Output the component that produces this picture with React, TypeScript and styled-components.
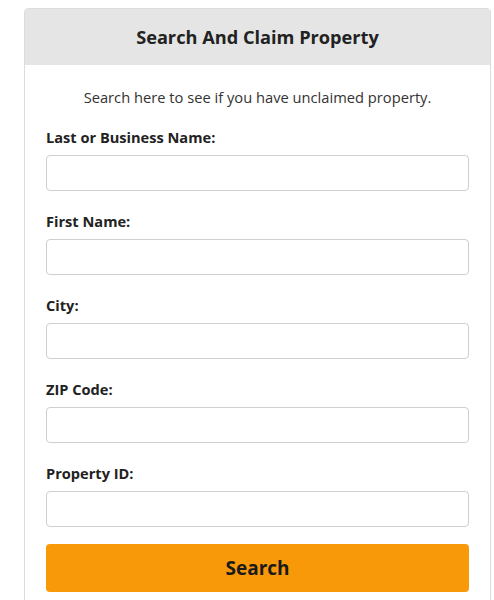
import styled, { createGlobalStyle } from 'styled-components';

const GlobalStyle = createGlobalStyle`
  body {
    margin: 0;
    background: #fff;
    font-family: "Open Sans", "Liberation Sans", sans-serif;
    color: #222;
  }
`;

const fields = ['Last or Business Name:', 'First Name:', 'City:', 'ZIP Code:', 'Property ID:'];

const Card = styled.div`
  width: 465px;
  margin: 8px 0 0 24px;
  border: 1px solid #dcdcdc;
  border-radius: 4px 4px 0 0;
  background: #fff;
`;

const Header = styled.div`
  height: 56px;
  background: #e5e5e5;
  display: flex;
  align-items: center;
  justify-content: center;
  font-size: 18.2px;
  font-weight: 700;
  color: #222;
`;

const Body = styled.form`
  padding: 22px 21px 20px;
`;

const Intro = styled.p`
  margin: 0;
  text-align: center;
  font-size: 14.7px;
  color: #333;
`;

const Field = styled.div<{ $first?: boolean }>`
  display: flex;
  flex-direction: column;
  margin-top: ${p => (p.$first ? '20px' : '20px')};
`;

const Label = styled.label`
  font-size: 14.6px;
  font-weight: 700;
  color: #222;
  margin-bottom: 8px;
`;

const Input = styled.input`
  height: 36px;
  box-sizing: border-box;
  border: 1px solid #cfcfcf;
  border-radius: 4px;
  padding: 0 10px;
  font-family: inherit;
  font-size: 14px;
`;

const Button = styled.button`
  width: 100%;
  height: 48px;
  margin-top: 17px;
  border: none;
  border-radius: 4px;
  background: #f8990a;
  font-family: inherit;
  font-size: 19px;
  font-weight: 700;
  color: #1a1a1a;
  cursor: pointer;
`;

const App = () => {
  return (
    <>
      <GlobalStyle />
      <Card>
        <Header>Search And Claim Property</Header>
        <Body onSubmit={e => e.preventDefault()}>
          <Intro>Search here to see if you have unclaimed property.</Intro>
          {fields.map((label, i) => (
            <Field key={label} $first={i === 0}>
              <Label>{label}</Label>
              <Input type="text" />
            </Field>
          ))}
          <Button type="submit">Search</Button>
        </Body>
      </Card>
    </>
  );
};

export default App;
